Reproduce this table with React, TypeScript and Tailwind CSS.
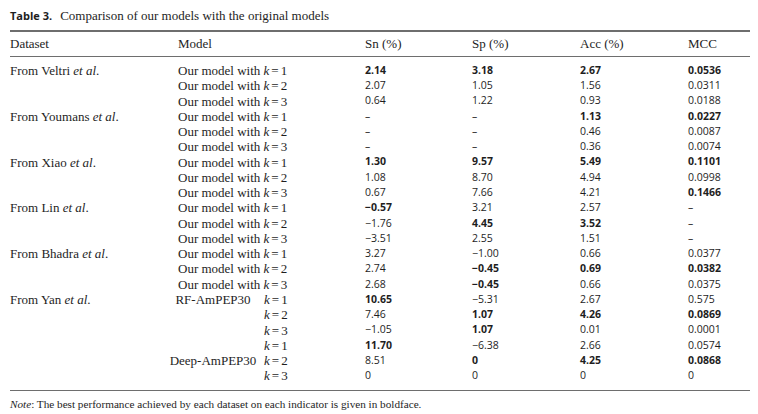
import React from "react";

const serif = { fontFamily: '"Liberation Serif", "DejaVu Serif", serif' };
const sans = { fontFamily: '"Open Sans", "Noto Sans", sans-serif' };

type Cell = { v: string; b?: boolean };
type Row = {
  ds?: string;
  model?: string;
  name?: string;
  k: number;
  yan?: boolean;
  vals: Cell[];
};

const c = (v: string, b = false): Cell => ({ v, b });

const rows: Row[] = [
  { ds: "Veltri", k: 1, vals: [c("2.14", true), c("3.18", true), c("2.67", true), c("0.0536", true)] },
  { k: 2, vals: [c("2.07"), c("1.05"), c("1.56"), c("0.0311")] },
  { k: 3, vals: [c("0.64"), c("1.22"), c("0.93"), c("0.0188")] },
  { ds: "Youmans", k: 1, vals: [c("–"), c("–"), c("1.13", true), c("0.0227", true)] },
  { k: 2, vals: [c("–"), c("–"), c("0.46"), c("0.0087")] },
  { k: 3, vals: [c("–"), c("–"), c("0.36"), c("0.0074")] },
  { ds: "Xiao", k: 1, vals: [c("1.30", true), c("9.57", true), c("5.49", true), c("0.1101", true)] },
  { k: 2, vals: [c("1.08"), c("8.70"), c("4.94"), c("0.0998")] },
  { k: 3, vals: [c("0.67"), c("7.66"), c("4.21"), c("0.1466", true)] },
  { ds: "Lin", k: 1, vals: [c("−0.57", true), c("3.21"), c("2.57"), c("–")] },
  { k: 2, vals: [c("−1.76"), c("4.45", true), c("3.52", true), c("–")] },
  { k: 3, vals: [c("−3.51"), c("2.55"), c("1.51"), c("–")] },
  { ds: "Bhadra", k: 1, vals: [c("3.27"), c("−1.00"), c("0.66"), c("0.0377")] },
  { k: 2, vals: [c("2.74"), c("−0.45", true), c("0.69", true), c("0.0382", true)] },
  { k: 3, vals: [c("2.68"), c("−0.45", true), c("0.66"), c("0.0375")] },
  { ds: "Yan", yan: true, name: "RF-AmPEP30", k: 1, vals: [c("10.65", true), c("−5.31"), c("2.67"), c("0.575")] },
  { yan: true, k: 2, vals: [c("7.46"), c("1.07", true), c("4.26", true), c("0.0869", true)] },
  { yan: true, k: 3, vals: [c("−1.05"), c("1.07", true), c("0.01"), c("0.0001")] },
  { yan: true, k: 1, vals: [c("11.70", true), c("−6.38"), c("2.66"), c("0.0574")] },
  { yan: true, name: "Deep-AmPEP30", k: 2, vals: [c("8.51"), c("0", true), c("4.25", true), c("0.0868", true)] },
  { yan: true, k: 3, vals: [c("0"), c("0"), c("0"), c("0")] },
];

function K({ k }: { k: number }) {
  return (
    <span>
      <i>k</i>
      <span className="px-[2px]">=</span>
      {k}
    </span>
  );
}

const grid = "grid grid-cols-[168px_187px_107px_108px_108px_62px]";

export default function App() {
  return (
    <div className="w-[758px] h-[414px] bg-white text-[#1e1e1e] overflow-hidden">
      <div className="pl-[10px] pr-[8px] pt-[8px]">
        <div className="h-[16px] flex items-center whitespace-nowrap text-[13px]" style={serif}>
          <span className="font-bold text-[11px]" style={sans}>
            Table 3.
          </span>
          <span className="ml-[8px]">Comparison of our models with the original models</span>
        </div>
        <div className="mt-[6px] h-[1.5px] bg-[#6e6e6e]" />
        <div className={`${grid} h-[24px] items-center text-[13px]`} style={serif}>
          <div>Dataset</div>
          <div>Model</div>
          <div>Sn (%)</div>
          <div>Sp (%)</div>
          <div>Acc (%)</div>
          <div>MCC</div>
        </div>
        <div className="h-[1.5px] bg-[#6e6e6e]" />
        <div className="pt-[4px]">
          {rows.map((r, i) => (
            <div key={i} className={`${grid} h-[15.27px] items-center whitespace-nowrap`}>
              <div className="text-[13px]" style={serif}>
                {r.ds && (
                  <span>
                    From {r.ds} <i>et al</i>.
                  </span>
                )}
              </div>
              <div className="text-[13px]" style={serif}>
                {r.yan ? (
                  <div className="flex items-center -ml-[16px]">
                    <div className="w-[102px] text-center">{r.name ?? ""}</div>
                    <K k={r.k} />
                  </div>
                ) : (
                  <span>
                    Our model with <K k={r.k} />
                  </span>
                )}
              </div>
              {r.vals.map((v, j) => (
                <div key={j} className={`text-[10.5px] ${v.b ? "font-bold" : ""}`} style={sans}>
                  {v.v}
                </div>
              ))}
            </div>
          ))}
        </div>
        <div className="mt-[8px] h-[1.5px] bg-[#6e6e6e]" />
        <div className="mt-[6px] h-[14px] flex items-center text-[11.2px] whitespace-nowrap" style={serif}>
          <span>
            <i>Note</i>: The best performance achieved by each dataset on each indicator is given in boldface.
          </span>
        </div>
      </div>
    </div>
  );
}
